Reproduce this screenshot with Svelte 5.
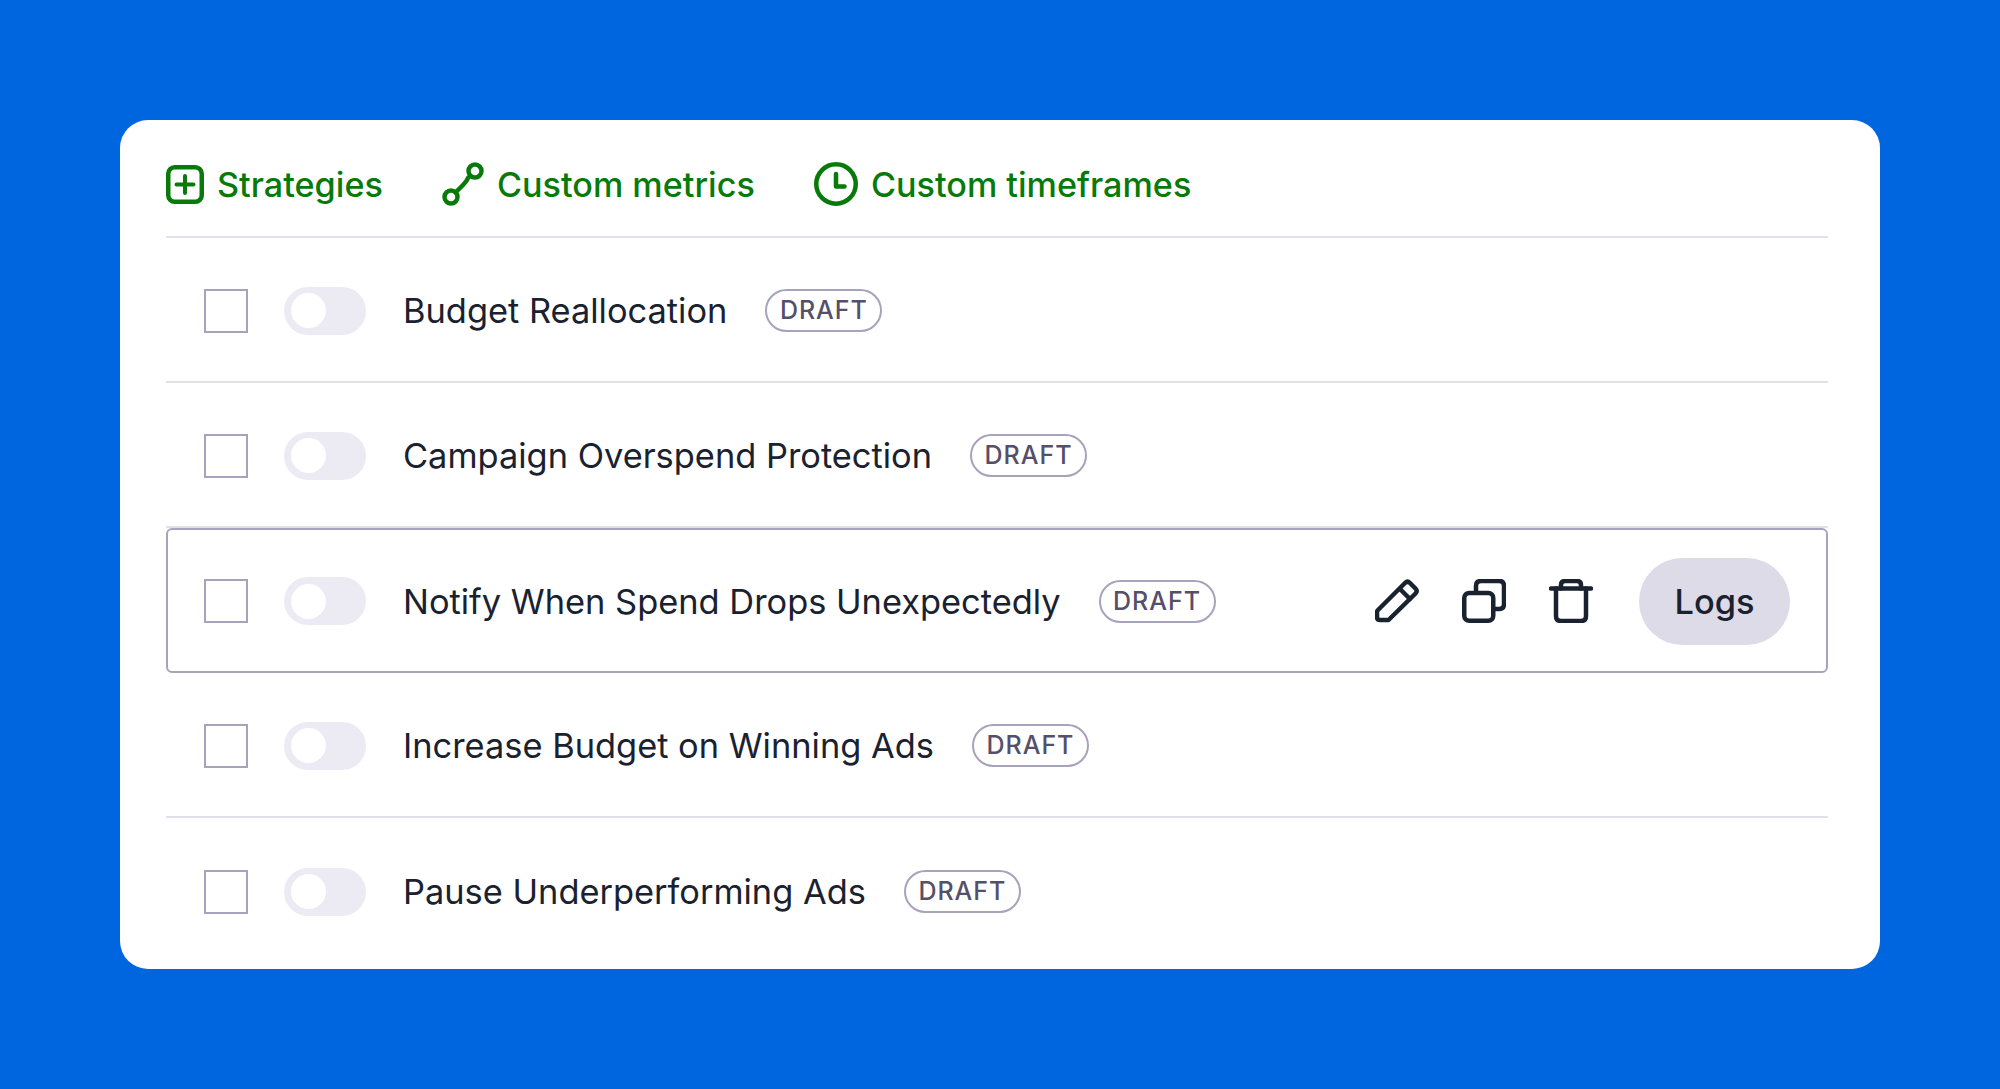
<script lang="ts">
	const rows = [
		{ name: 'Budget Reallocation' },
		{ name: 'Campaign Overspend Protection' },
		{ name: 'Notify When Spend Drops Unexpectedly', active: true },
		{ name: 'Increase Budget on Winning Ads' },
		{ name: 'Pause Underperforming Ads' }
	];
</script>

<main class="page">
	<section class="card">
		<nav class="tabs">
			<div class="tab strategies">
				<svg class="tab-icon plus" viewBox="0 0 38 39" fill="none" stroke="currentColor">
					<rect x="2.25" y="2.25" width="33.5" height="34.5" rx="6.5" stroke-width="4.5" />
					<path d="M19 11v17M10.5 19.5h17" stroke-width="4" stroke-linecap="round" />
				</svg>
				<span>Strategies</span>
			</div>
			<div class="tab metrics">
				<svg class="tab-icon link" viewBox="0 0 42 44" fill="none" stroke="currentColor" stroke-width="4.5">
					<circle cx="9" cy="35" r="6.500" />
					<circle cx="33" cy="9" r="6.500" />
					<path d="M14 30 21 23q4-4 5-7l2-2" stroke-linecap="round" />
				</svg>
				<span>Custom metrics</span>
			</div>
			<div class="tab">
				<svg class="tab-icon" viewBox="0 0 44 44" fill="none" stroke="currentColor">
					<circle cx="22" cy="22" r="19.750" stroke-width="4.500" />
					<path d="M22 12v12.500h8.500" stroke-width="4.500" stroke-linecap="round" stroke-linejoin="round" />
				</svg>
				<span>Custom timeframes</span>
			</div>
		</nav>

		<div class="list">
			{#each rows as row (row.name)}
				<div class="row" class:active={row.active}>
					<span class="checkbox"></span>
					<span class="toggle"><span class="thumb"></span></span>
					<span class="name">{row.name}</span>
					<span class="pill">DRAFT</span>
					{#if row.active}
						<div class="actions">
							<svg viewBox="0 0 44 44" fill="none" stroke="currentColor" stroke-width="4.500" stroke-linejoin="round" stroke-linecap="round">
								<path d="M3 31 30 4q2.500-2.500 5 0l5.500 5.500q2.500 2.500 0 5L13.500 41H5q-3 0-3-3v-5q0-1 1-2Z" />
								<path d="M25 10 35 20" />
							</svg>
							<svg viewBox="0 0 44 44" fill="none" stroke="currentColor" stroke-width="4.500" stroke-linejoin="round">
								<rect x="2.250" y="14" width="29" height="27.750" rx="5" />
								<path d="M14 14V7q0-5 5-5h18q5 0 5 5v18q0 5-5 5h-6" />
							</svg>
							<svg viewBox="0 0 44 44" fill="none" stroke="currentColor" stroke-width="4.500" stroke-linejoin="round" stroke-linecap="round">
								<path d="M2 9.500h40" />
								<path d="M12 9.500V6q0-4 4-4h12q4 0 4 4v3.500" />
								<path d="M7 9.500V37q0 5 5 5h20q5 0 5-5V9.500" />
							</svg>
							<button type="button" class="logs">Logs</button>
						</div>
					{/if}
				</div>
			{/each}
		</div>
	</section>
</main>

<style>
	:global(body) {
		background: #0066e0;
	}
	.page {
		height: 1089px;
		padding-top: 120px;
		box-sizing: border-box;
		font-family: Inter, 'Noto Sans', sans-serif;
		overflow: hidden;
	}
	.card {
		width: 1760px;
		height: 849px;
		margin: 0 auto;
		padding: 0 52px 0 46px;
		box-sizing: border-box;
		background: #fff;
		border-radius: 28px;
	}
	.tabs {
		display: flex;
		align-items: center;
		height: 104px;
		padding-top: 12px;
		border-bottom: 2px solid #e2e0ec;
		color: #087a0a;
		font-size: 34.2px;
		font-weight: 500;
	}
	.tab {
		display: flex;
		align-items: center;
		gap: 13px;
	}
	.tab-icon {
		width: 44px;
		height: 44px;
		flex: none;
	}
	.tab-icon.plus {
		width: 38px;
		height: 39px;
	}
	.tab-icon.link {
		width: 42px;
	}
	.strategies {
		margin-right: 59px;
	}
	.metrics {
		margin-right: 59px;
	}
	.row {
		display: flex;
		align-items: center;
		height: 145px;
		padding: 2px 38px 0;
		box-sizing: border-box;
		border-bottom: 2px solid #e2e0ec;
		color: #1a2230;
	}
	.row:last-child {
		border-bottom: none;
	}
	.row.active {
		border: 2px solid #a9a2bd;
		border-radius: 6px;
		padding: 1px 36px 0;
	}
	.checkbox {
		width: 44px;
		height: 44px;
		box-sizing: border-box;
		border: 2.5px solid #a9a2bd;
		flex: none;
	}
	.toggle {
		width: 82px;
		height: 48px;
		margin: 0 37px 0 36px;
		padding: 6.5px 7px;
		box-sizing: border-box;
		background: #ecebf4;
		border-radius: 24px;
		flex: none;
	}
	.thumb {
		display: block;
		width: 35px;
		height: 35px;
		background: #fff;
		border-radius: 50%;
	}
	.name {
		font-size: 34.4px;
		font-weight: 400;
		white-space: nowrap;
	}
	.pill {
		margin-left: 38px;
		width: 117px;
		height: 43px;
		box-sizing: border-box;
		border: 2px solid #a9a2bd;
		border-radius: 22px;
		color: #55506a;
		font-size: 25px;
		font-weight: 500;
		letter-spacing: 1px;
		line-height: 39px;
		text-align: center;
		flex: none;
	}
	.actions {
		display: flex;
		align-items: center;
		gap: 43px;
		margin-left: auto;
	}
	.actions svg {
		width: 44px;
		height: 44px;
		flex: none;
	}
	.logs {
		width: 151px;
		height: 87px;
		margin-left: 3px;
		border: none;
		border-radius: 44px;
		background: #dddbe7;
		color: #1a2230;
		font: 500 34.4px Inter, sans-serif;
	}
</style>
